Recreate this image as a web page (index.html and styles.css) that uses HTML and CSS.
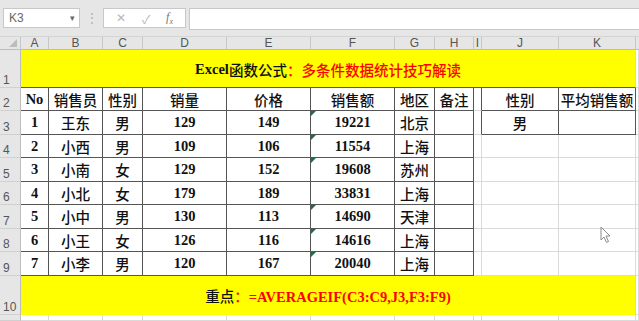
FILE: index.html
```html
<!doctype html>
<html lang="zh-CN">

<head>
    <meta charset="UTF-8">
    <title>多条件数据统计</title>
    <link rel="stylesheet" href="styles.css">
</head>

<body>
    <div class="toolbar">
        <div class="namebox"><span>K3</span><span class="caret">&#9662;</span></div>
        <div class="dots">&#8942;</div>
        <div class="fxbox">
            <span>&#10005;</span>
            <span>&#10003;</span>
            <span class="fx">f<sub>x</sub></span>
        </div>
        <div class="formula"></div>
    </div>

    <div class="sheet">
        <!-- column headers -->
        <div class="corner"><span class="tri"></span></div>
        <div class="colhead">A</div>
        <div class="colhead">B</div>
        <div class="colhead">C</div>
        <div class="colhead">D</div>
        <div class="colhead">E</div>
        <div class="colhead">F</div>
        <div class="colhead">G</div>
        <div class="colhead">H</div>
        <div class="colhead">I</div>
        <div class="colhead">J</div>
        <div class="colhead">K</div>
        <div class="colhead fill"></div>

        <!-- row 1 -->
        <div class="rowhead">1</div>
        <div class="banner title"><b>Excel</b>函数公式<span class="red">：多条件数据统计技巧解读</span></div>
        <div class="cell"></div>

        <!-- row 2 -->
        <div class="rowhead">2</div>
        <div class="cell tb num">No</div>
        <div class="cell tb">销售员</div>
        <div class="cell tb">性别</div>
        <div class="cell tb">销量</div>
        <div class="cell tb">价格</div>
        <div class="cell tb">销售额</div>
        <div class="cell tb">地区</div>
        <div class="cell tb">备注</div>
        <div class="cell edge"></div>
        <div class="cell tb">性别</div>
        <div class="cell tb">平均销售额</div>
        <div class="cell"></div>

        <!-- row 3 -->
        <div class="rowhead">3</div>
        <div class="cell tb num">1</div>
        <div class="cell tb">王东</div>
        <div class="cell tb">男</div>
        <div class="cell tb num">129</div>
        <div class="cell tb num">149</div>
        <div class="cell tb num txt">19221</div>
        <div class="cell tb">北京</div>
        <div class="cell tb"></div>
        <div class="cell edge"></div>
        <div class="cell tb">男</div>
        <div class="cell tb"></div>
        <div class="cell"></div>

        <!-- row 4 -->
        <div class="rowhead">4</div>
        <div class="cell tb num">2</div>
        <div class="cell tb">小西</div>
        <div class="cell tb">男</div>
        <div class="cell tb num">109</div>
        <div class="cell tb num">106</div>
        <div class="cell tb num txt">11554</div>
        <div class="cell tb">上海</div>
        <div class="cell tb"></div>
        <div class="cell"></div>
        <div class="cell"></div>
        <div class="cell"></div>
        <div class="cell"></div>

        <!-- row 5 -->
        <div class="rowhead">5</div>
        <div class="cell tb num">3</div>
        <div class="cell tb">小南</div>
        <div class="cell tb">女</div>
        <div class="cell tb num">129</div>
        <div class="cell tb num">152</div>
        <div class="cell tb num txt">19608</div>
        <div class="cell tb">苏州</div>
        <div class="cell tb"></div>
        <div class="cell"></div>
        <div class="cell"></div>
        <div class="cell"></div>
        <div class="cell"></div>

        <!-- row 6 -->
        <div class="rowhead">6</div>
        <div class="cell tb num">4</div>
        <div class="cell tb">小北</div>
        <div class="cell tb">女</div>
        <div class="cell tb num">179</div>
        <div class="cell tb num">189</div>
        <div class="cell tb num">33831</div>
        <div class="cell tb">上海</div>
        <div class="cell tb"></div>
        <div class="cell"></div>
        <div class="cell"></div>
        <div class="cell"></div>
        <div class="cell"></div>

        <!-- row 7 -->
        <div class="rowhead">7</div>
        <div class="cell tb num">5</div>
        <div class="cell tb">小中</div>
        <div class="cell tb">男</div>
        <div class="cell tb num">130</div>
        <div class="cell tb num">113</div>
        <div class="cell tb num txt">14690</div>
        <div class="cell tb">天津</div>
        <div class="cell tb"></div>
        <div class="cell"></div>
        <div class="cell"></div>
        <div class="cell"></div>
        <div class="cell"></div>

        <!-- row 8 -->
        <div class="rowhead">8</div>
        <div class="cell tb num">6</div>
        <div class="cell tb">小王</div>
        <div class="cell tb">女</div>
        <div class="cell tb num">126</div>
        <div class="cell tb num">116</div>
        <div class="cell tb num txt">14616</div>
        <div class="cell tb">上海</div>
        <div class="cell tb"></div>
        <div class="cell"></div>
        <div class="cell"></div>
        <div class="cell"></div>
        <div class="cell"></div>

        <!-- row 9 -->
        <div class="rowhead">9</div>
        <div class="cell tb num">7</div>
        <div class="cell tb">小李</div>
        <div class="cell tb">男</div>
        <div class="cell tb num">120</div>
        <div class="cell tb num">167</div>
        <div class="cell tb num txt">20040</div>
        <div class="cell tb">上海</div>
        <div class="cell tb"></div>
        <div class="cell"></div>
        <div class="cell"></div>
        <div class="cell"></div>
        <div class="cell"></div>

        <!-- row 10 -->
        <div class="rowhead">10</div>
        <div class="banner key">重点<span class="red">：<b>=AVERAGEIF(C3:C9,J3,F3:F9)</b></span></div>
        <div class="cell"></div>

        <!-- row 11 (only its top edge shows) -->
        <div class="rowhead short"></div>
        <div class="cell"></div>
        <div class="cell"></div>
        <div class="cell"></div>
        <div class="cell"></div>
        <div class="cell"></div>
        <div class="cell"></div>
        <div class="cell"></div>
        <div class="cell"></div>
        <div class="cell"></div>
        <div class="cell"></div>
        <div class="cell"></div>
        <div class="cell"></div>
    </div>

    <svg class="cursor" width="12" height="18" viewBox="0 0 12 18">
        <path d="M1 1 L1 14 L4 11 L6.5 16.5 L8.5 15.5 L6 10 L10 10 Z" fill="#fff" stroke="#8a8a8a" stroke-width="1" stroke-linejoin="round"/>
    </svg>
</body>

</html>
```

FILE: styles.css
```css
body {
    margin: 0;
    width: 639px;
    height: 321px;
    overflow: hidden;
    background: #fff;
    font-family: 'Liberation Sans', 'Noto Sans CJK SC', sans-serif;
    position: relative;
}

/* formula bar */
.toolbar {
    height: 37px;
    box-sizing: border-box;
    background: #e6e6e6;
    display: flex;
    align-items: flex-start;
    padding: 8px 0 0 3px;
    border-bottom: 1px solid #d4d4d4;
}

.namebox {
    width: 77px;
    height: 20px;
    box-sizing: border-box;
    background: #fff;
    border: 1px solid #c8c8c8;
    display: flex;
    align-items: center;
    justify-content: space-between;
    padding: 0 4px 0 5px;
    font-size: 12px;
    color: #666;
}

.caret {
    font-size: 9px;
    color: #666;
}

.dots {
    width: 23px;
    text-align: center;
    color: #b0b0b0;
    font-size: 12px;
    line-height: 20px;
}

.fxbox {
    width: 83px;
    height: 20px;
    box-sizing: border-box;
    background: #fff;
    border: 1px solid #c8c8c8;
    display: flex;
    align-items: center;
    justify-content: space-around;
    padding: 0 4px;
    color: #b8b8b8;
    font-size: 12px;
}

.fx {
    font-family: 'Liberation Serif', serif;
    font-style: italic;
    color: #777;
    font-size: 12px;
}

.fx sub {
    font-size: 8px;
}

.formula {
    flex: 1;
    height: 20px;
    margin-left: 3px;
    background: #fff;
    border: 1px solid #c8c8c8;
    border-right: none;
}

/* sheet grid */
.sheet {
    display: grid;
    grid-template-columns: 21px 28px 54px 40px 84px 84px 84px 40px 39px 8px 77px 77px 1fr;
    grid-template-rows: 13px 38px 23px 24px 23px 24px 23px 24px 23px 24px 39px 1fr;
    height: 284px;
}

.corner,
.colhead,
.rowhead {
    background: #e6e6e6;
    color: #555;
    font-size: 12px;
    box-sizing: border-box;
    border-right: 1px solid #c6c6c6;
    border-bottom: 1px solid #bdbdbd;
}

.corner {
    display: flex;
    align-items: flex-end;
    justify-content: flex-end;
    padding: 0 3px 2px 0;
}

.tri {
    width: 0;
    height: 0;
    border-left: 8px solid transparent;
    border-bottom: 8px solid #bcbcbc;
}

.colhead {
    display: flex;
    align-items: center;
    justify-content: center;
    line-height: 1;
}

.colhead.fill {
    border-right: none;
}

.rowhead {
    display: flex;
    align-items: flex-end;
    padding: 0 0 1px 3px;
    line-height: 1;
    border-bottom-color: #d0d0d0;
    border-right-color: #bdbdbd;
}

.cell {
    box-sizing: border-box;
    border-right: 1px solid #dadada;
    border-bottom: 1px solid #dadada;
    display: flex;
    align-items: center;
    justify-content: center;
    font-family: 'Liberation Serif', 'Noto Sans CJK SC', serif;
    font-size: 14.5px;
    font-weight: 500;
    color: #111;
    position: relative;
}

.cell.num {
    font-weight: bold;
}

.cell.tb {
    border-color: #555;
}

.cell.edge {
    border-right-color: #555;
}

/* number stored as text marker */
.cell.txt::before {
    content: '';
    position: absolute;
    left: 0;
    top: 0;
    border-top: 5px solid #1e7145;
    border-right: 5px solid transparent;
}

.banner {
    grid-column: 2 / 13;
    background: #ffff00;
    box-sizing: border-box;
    border-right: 1px solid #dadada;
    display: flex;
    align-items: center;
    justify-content: center;
    font-family: 'Liberation Serif', 'Noto Sans CJK SC', serif;
    font-size: 14.5px;
    font-weight: 500;
    color: #111;
    white-space: nowrap;
}

.banner b {
    font-weight: bold;
}

.banner.title {
    border-bottom: 1px solid #555;
    padding-top: 2px;
}

.red {
    color: #ff0000;
}

.cursor {
    position: absolute;
    left: 600px;
    top: 226px;
}
```
